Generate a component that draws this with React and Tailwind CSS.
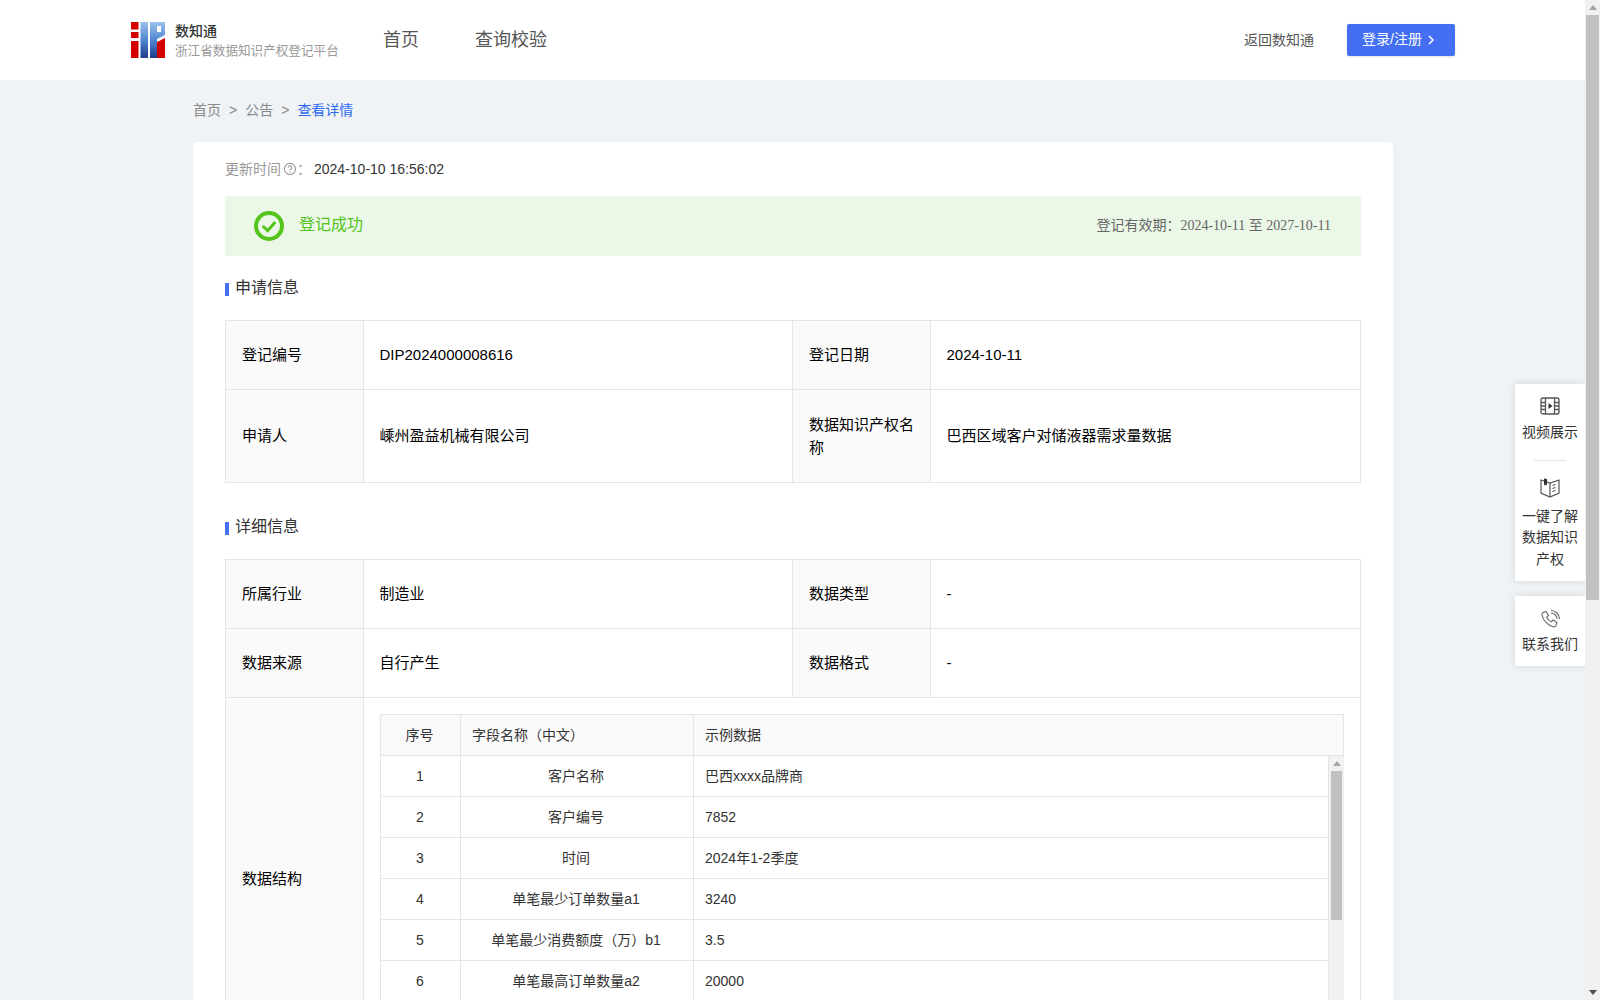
const fonts = "font-['Liberation_Sans','Noto_Sans_CJK_SC',sans-serif]";

const fields = [
  ["1", "客户名称", "巴西xxxx品牌商"],
  ["2", "客户编号", "7852"],
  ["3", "时间", "2024年1-2季度"],
  ["4", "单笔最少订单数量a1", "3240"],
  ["5", "单笔最少消费额度（万）b1", "3.5"],
  ["6", "单笔最高订单数量a2", "20000"],
];

function Logo() {
  return (
    <svg width="34" height="36" viewBox="0 0 34 36" className="shrink-0">
      <defs>
        <linearGradient id="blue" x1="0" y1="0" x2="0" y2="36" gradientUnits="userSpaceOnUse">
          <stop offset="0" stopColor="#9cc2ee" />
          <stop offset="0.5" stopColor="#4f86d0" />
          <stop offset="1" stopColor="#1f3c8c" />
        </linearGradient>
      </defs>
      <rect x="0" y="0" width="7.5" height="7.5" fill="#d40000" />
      <rect x="0" y="10" width="7.5" height="6" fill="#d40000" />
      <rect x="0" y="19" width="7.5" height="17" fill="#d40000" />
      <rect x="9.5" y="0" width="7.5" height="36" fill="url(#blue)" />
      <rect x="19" y="0" width="7" height="36" fill="url(#blue)" />
      <path d="M26 0h8v13l-8 4z" fill="url(#blue)" />
      <rect x="26" y="4" width="4" height="6" fill="#fff" />
      <path d="M26 20l8-4v20h-8z" fill="#d40000" />
    </svg>
  );
}

function SideItem({ icon, labelClass, children }) {
  return (
    <div className="flex flex-col items-center">
      {icon}
      <div className={`w-[56px] text-center text-[14px] leading-[21.5px] text-[#333] ${labelClass}`}>{children}</div>
    </div>
  );
}

function Section({ title }) {
  return (
    <div className="flex items-center text-[16px] text-[#333]">
      <span className="mr-[6px] mt-[2px] h-[13px] w-[4px] bg-[#446ff2]" />
      {title}
    </div>
  );
}

function Label({ children }) {
  return (
    <div className="flex items-center border-r border-[#e5e5e5] bg-[#fafafa] px-[16px] text-[15px] leading-[23.5px] text-black">
      {children}
    </div>
  );
}

function Value({ children }) {
  return (
    <div className="flex items-center border-r border-[#e5e5e5] px-[15.5px] text-[15px] text-black">
      {children}
    </div>
  );
}

function FieldTable() {
  return (
    <div className="border-l border-t border-[#e5e5e5] text-[14px] text-[#333]">
      <div className="grid h-[41px] grid-cols-[80px_233px_1fr] border-b border-r border-[#e5e5e5] bg-[#fafafa]">
        <div className="flex items-center justify-center border-r border-[#e5e5e5] pr-[2px]">序号</div>
        <div className="flex items-center border-r border-[#e5e5e5] px-[11px]">字段名称（中文）</div>
        <div className="flex items-center px-[11px]">示例数据</div>
      </div>
      <div className="flex h-[288px] overflow-hidden">
        <div className="flex-1">
          {fields.map((row) => (
            <div key={row[0]} className="grid h-[41px] grid-cols-[80px_233px_1fr] border-b border-r border-[#e5e5e5]">
              <div className="flex items-center justify-center border-r border-[#e5e5e5] pr-[1px]">{row[0]}</div>
              <div className="flex items-center justify-center border-r border-[#e5e5e5] pr-[2px]">{row[1]}</div>
              <div className="flex items-center px-[11px]">{row[2]}</div>
            </div>
          ))}
        </div>
        <div className="flex w-[15px] flex-col items-center bg-[#f1f1f1]">
          <div className="mb-[5px] mt-[5px] h-0 w-0 border-x-[4px] border-b-[5px] border-x-transparent border-b-[#a3a3a3]" />
          <div className="h-[149px] w-[11px] bg-[#c1c1c1]" />
        </div>
      </div>
    </div>
  );
}

export default function App() {
  return (
    <div className={`flex h-screen overflow-hidden bg-[#eff3f6] ${fonts}`}>
      <div className="relative min-w-0 flex-1 overflow-hidden">
        <header className="flex h-[80px] items-center bg-white pl-[131px] pr-[130px]">
          <Logo />
          <div className="ml-[10px] w-[173px]">
            <div className="text-[14px] font-medium leading-[20px] text-[#333]">数知通</div>
            <div className="mt-[1px] whitespace-nowrap text-[12.6px] leading-[18px] text-[#999]">浙江省数据知识产权登记平台</div>
          </div>
          <nav className="ml-[35px] flex gap-[56px] text-[18px] text-[#555]">
            <span>首页</span>
            <span>查询校验</span>
          </nav>
          <div className="ml-auto text-[14px] text-[#555]">返回数知通</div>
          <button className="ml-[33px] flex h-[32px] w-[108px] items-center justify-center rounded-[2px] bg-[#446ff2] pb-[1px] pr-[4px] text-[14px] text-white shadow-sm">
            登录/注册
            <svg width="10" height="12" viewBox="0 0 10 12" className="ml-[4px]" fill="none" stroke="#fff" strokeWidth="1.5">
              <path d="M3 2l4 4-4 4" />
            </svg>
          </button>
        </header>

        <div className="ml-[193px] w-[1200px]">
          <div className="flex h-[62px] items-center pb-[2px] text-[14px] text-[#888]">
            <span>首页</span>
            <span className="mx-[8px]">&gt;</span>
            <span>公告</span>
            <span className="mx-[8px]">&gt;</span>
            <span className="text-[#2f6bf2]">查看详情</span>
          </div>

          <div className="rounded-t-[4px] bg-white px-[32px] pb-[40px]">
            <div className="flex h-[54px] items-center text-[14px] text-[#999]">
              更新时间
              <svg width="14" height="14" viewBox="0 0 14 14" className="ml-[2px]" fill="none" stroke="#999" strokeWidth="1.1">
                <circle cx="7" cy="7" r="5.6" />
                <path d="M5.2 5.6a1.8 1.8 0 1 1 2.6 1.6c-.6.3-.8.6-.8 1.2" />
                <path d="M7 9.6v1" />
              </svg>
              ：<span className="ml-[3px] text-[#333]">2024-10-10 16:56:02</span>
            </div>

            <div className="flex h-[60px] items-center justify-between bg-[#ebf7e7] pl-[29px] pr-[30px]">
              <div className="flex items-center text-[16px] text-[#52c41a]">
                <svg width="30" height="30" viewBox="0 0 30 30" fill="none" stroke="#52c41a">
                  <circle cx="15" cy="15" r="13" strokeWidth="4" />
                  <path d="M8.7 15l5 4.7 7.6-8.7" strokeWidth="3" />
                </svg>
                <span className="mb-[2px] ml-[15px]">登记成功</span>
              </div>
              <div className="mb-[2px] text-[14px] text-[#666]">
                登记有效期：<span className="font-['Liberation_Serif','Noto_Sans_CJK_SC',serif]">2024-10-11 至 2027-10-11</span>
              </div>
            </div>

            <div className="mb-[20px] mt-[20px]">
              <Section title="申请信息" />
            </div>
            <div className="border-l border-t border-[#e5e5e5]">
              <div className="grid h-[69px] grid-cols-[138px_429px_138px_1fr] border-b border-[#e5e5e5]">
                <Label>登记编号</Label>
                <Value>DIP2024000008616</Value>
                <Label>登记日期</Label>
                <Value>2024-10-11</Value>
              </div>
              <div className="grid h-[93px] grid-cols-[138px_429px_138px_1fr] border-b border-[#e5e5e5]">
                <Label>申请人</Label>
                <Value>嵊州盈益机械有限公司</Value>
                <Label>数据知识产权名称</Label>
                <Value>巴西区域客户对储液器需求量数据</Value>
              </div>
            </div>

            <div className="mb-[20px] mt-[32px]">
              <Section title="详细信息" />
            </div>
            <div className="border-l border-t border-[#e5e5e5]">
              <div className="grid h-[69px] grid-cols-[138px_429px_138px_1fr] border-b border-[#e5e5e5]">
                <Label>所属行业</Label>
                <Value>制造业</Value>
                <Label>数据类型</Label>
                <Value>-</Value>
              </div>
              <div className="grid h-[69px] grid-cols-[138px_429px_138px_1fr] border-b border-[#e5e5e5]">
                <Label>数据来源</Label>
                <Value>自行产生</Value>
                <Label>数据格式</Label>
                <Value>-</Value>
              </div>
              <div className="grid grid-cols-[138px_1fr] border-b border-[#e5e5e5]">
                <Label>数据结构</Label>
                <div className="border-r border-[#e5e5e5] p-[16px]">
                  <FieldTable />
                </div>
              </div>
            </div>
          </div>
        </div>

        <div className="absolute right-0 top-[384px] flex w-[70px] flex-col items-center bg-white pb-[11px] pt-[11px] shadow-[0_0_8px_rgba(0,0,0,0.12)]">
          <SideItem
            labelClass="mt-[5px]"
            icon={
              <svg width="22" height="22" viewBox="0 0 22 22" fill="none" stroke="#555" strokeWidth="1.3">
                <rect x="2" y="3" width="18" height="16" rx="2" />
                <path d="M6.5 3v16M15.5 3v16M2 7.5h4.5M2 11h4.5M2 14.5h4.5M15.5 7.5H20M15.5 11H20M15.5 14.5H20" />
                <path d="M9.5 8v6l4-3z" fill="#333" stroke="none" />
              </svg>
            }
          >
            视频展示
          </SideItem>
          <div className="mb-[15px] mt-[16px] h-px w-[32px] bg-[#e5e5e5]" />
          <SideItem
            labelClass="mt-[8px]"
            icon={
              <svg width="22" height="22" viewBox="0 0 22 22" fill="none" stroke="#555" strokeWidth="1.2">
                <path d="M2 4l9 3 9-3v13l-9 4-9-4z" />
                <path d="M11 7v14M13.5 9.5l3-1M13.5 12.5l3-1M13.5 15.5l3-1" />
                <path d="M5 2.5v7l1.5-1 1.5 1V3z" fill="#333" stroke="none" />
              </svg>
            }
          >
            一键了解数据知识产权
          </SideItem>
        </div>

        <div className="absolute right-0 top-[596px] flex h-[70px] w-[70px] flex-col items-center bg-white pt-[13px] shadow-[0_0_8px_rgba(0,0,0,0.12)]">
          <SideItem
            labelClass="mt-[3px]"
            icon={
              <svg width="22" height="22" viewBox="0 0 22 22" fill="none" stroke="#666" strokeWidth="1.1">
                <path d="M4 3.5l3-1 2.5 4-1.8 1.8c.8 2 2.5 3.7 4.5 4.5l1.8-1.8 4 2.5-1 3c-.5 1-1.5 1.5-2.5 1.3C8.500 16.500 4 11.500 3 6c-.2-1 .2-2 1-2.500z" />
                <path d="M12 4a6 6 0 0 1 6 6M12 1.500a8.500 8.500 0 0 1 8.500 8.500" />
              </svg>
            }
          >
            联系我们
          </SideItem>
        </div>
      </div>

      <div className="flex w-[15px] shrink-0 flex-col items-center bg-[#f1f1f1]">
        <div className="mb-[5px] mt-[5px] h-0 w-0 border-x-[4px] border-b-[5px] border-x-transparent border-b-[#a3a3a3]" />
        <div className="h-[585px] w-[13px] bg-[#c1c1c1]" />
        <div className="mb-[5px] mt-auto h-0 w-0 border-x-[4px] border-t-[5px] border-x-transparent border-t-[#505050]" />
      </div>
    </div>
  );
}
